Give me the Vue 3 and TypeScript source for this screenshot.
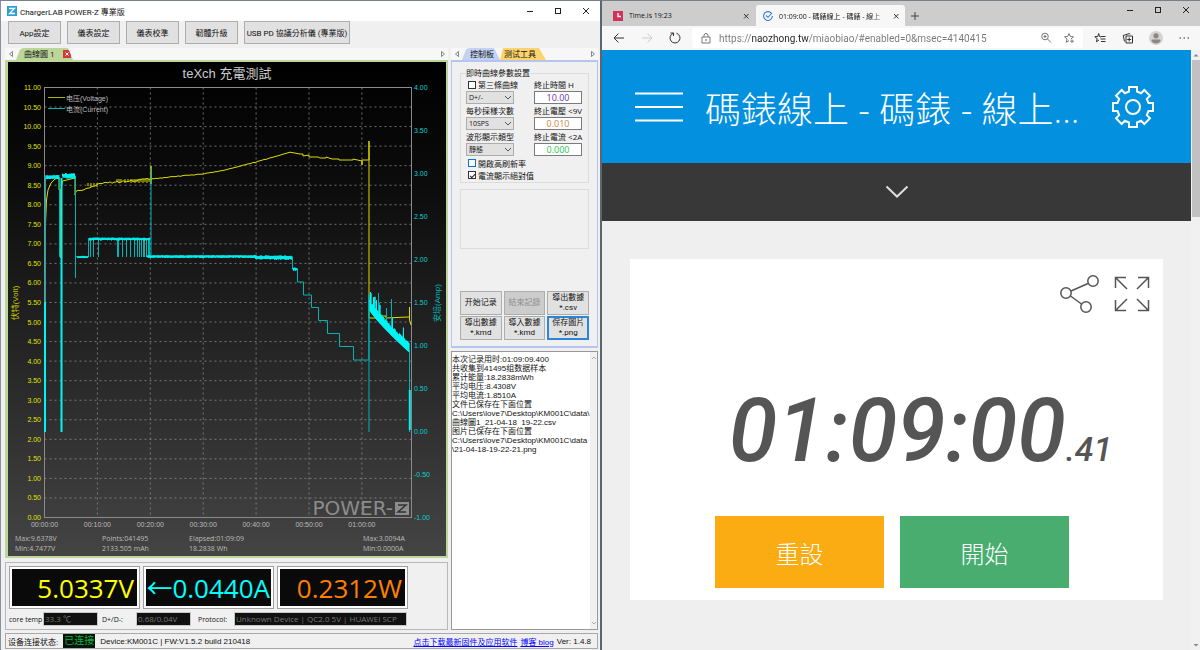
<script setup lang="ts">
import { ref } from 'vue'

const toolbar = ['App設定', '儀表設定', '儀表校準', '韌體升級']
const PLOT = { left: 44.5, right: 411.5, top: 87.5, bottom: 517.5 }

const voltTicks = Array.from({ length: 23 }, (_, i) => ({
  label: (11 - i * 0.5).toFixed(2),
  y: PLOT.top + (i * 430) / 22,
}))
const ampTicks = Array.from({ length: 11 }, (_, i) => ({
  label: (4 - i * 0.5).toFixed(2),
  y: PLOT.top + i * 43,
}))
const timeTicks = Array.from({ length: 7 }, (_, i) => ({
  label: i === 6 ? '01:00:00' : `00:${i}0:00`,
  x: PLOT.left + i * 52.9,
}))

const noise = (n: number) => Math.abs(Math.sin(n * 12.9898) * 43758.5453) % 1

function band(x0: number, x1: number, y: number, amp: number, step = 0.5): string {
  let d = ''
  let i = 0
  for (let x = x0; x <= x1; x += step) {
    const sign = i++ % 2 ? 1 : -1
    d += `L${x.toFixed(1)} ${(y + sign * amp * (0.6 + 0.5 * noise(x))).toFixed(1)}`
  }
  return d
}

function jitter(points: number[][], amp: number): string {
  let d = ''
  for (let i = 1; i < points.length; i++) {
    const [xa, ya] = points[i - 1]
    const [xb, yb] = points[i]
    for (let x = xa; x < xb; x += 2) {
      const y = ya + ((yb - ya) * (x - xa)) / (xb - xa)
      d += `L${x} ${(y + (noise(x) - 0.5) * amp).toFixed(1)}`
    }
  }
  return d
}

const voltagePath =
  'M45.5 270V224L46.5 200L48 190L51 183L55 179L59 178V190L61 190V258V190' +
  'L62.5 181L75 178V195' +
  jitter([[76, 192], [80, 190], [88, 188], [98, 184]], 2) +
  jitter([[98, 183], [117, 182], [150, 179]], 2) +
  'L151 180V166V184V179' +
  jitter([[152, 179], [180, 176], [203, 174], [225, 170], [256, 162], [291, 152]], 0.6) +
  'L300 154H303V156L309 155V157H318L320 158H326V157L332 159H339V160H353V159L362 161V165V160H369V141V318' +
  'H376V316H386V318L408 317H409.500V307V320L411 325'
const voltageNoise = [88, 91, 94, 97, 117, 119, 121, 125, 128, 131, 133, 135, 137, 139, 141, 143, 145, 147, 149]
  .map((x, i) => `M${x} ${i < 4 ? 183 : 179}v${3 + (i % 2)}`)
  .join('')

const currentBands = [
  'M46 177' + band(46, 59, 177, 2),
  'M62.5 176' + band(62.5, 75, 176, 2.5),
  'M77 257' + band(77, 88, 257, 1),
  'M89 239' + band(89, 150, 239, 1.3),
  'M147 257' + band(147, 255, 256.5, 1.3),
  'M255 257' + band(255, 292, 257.5, 2),
  'M293 269' + band(293, 297, 269, 1.5),
].join('')
const currentDrops = [88, 90, 93, 98, 117, 118, 122, 126, 130, 134, 137, 139, 141, 143, 144, 146, 148, 149]
  .map((x) => `M${x}.5 239V257`)
  .join('')
const currentPath =
  'M45.5 420V177M59.5 177V257M75.5 176V278V257M151 257V168M292.5 257V269H297.5V282H303.5V295H311.5V307.5H318.5V320.5' +
  'H327.5V333.5H339.5V346.5H353.5V360H369V295V432M409.5 350V432M378.5 320V293M391.5 330V299M379.5 318V303M386.5 325V308'
const currentStrong = 'M45 432V302M61.5 432V178M409.8 390V430'
const decay = (() => {
  let d = 'M369.5 300'
  for (let x = 370; x <= 409; x += 0.5) {
    const t = (x - 369) / 40
    const y = 306 + 43 * Math.pow(t, 0.85)
    const spread = 4 + 3 * noise(x) + (noise(x + 7) > 0.88 ? 11 : 0)
    d += `L${x} ${(y - spread).toFixed(1)}L${x} ${(y + 3).toFixed(1)}`
  }
  return d
})()

const gear = (() => {
  const pts: string[] = []
  for (let k = 0; k < 8; k++) {
    const a = (k * Math.PI) / 4
    for (const [x, y] of [[-4, -15.5], [-4, -20], [4, -20], [4, -15.5]]) {
      const px = x * Math.cos(a) - y * Math.sin(a)
      const py = x * Math.sin(a) + y * Math.cos(a)
      pts.push(`${px.toFixed(2)},${py.toFixed(2)}`)
    }
  }
  return pts.join(' ')
})()

const thirdCurve = ref(false)
const highRefresh = ref(false)
const absCurrent = ref(true)
const stopTime = ref('10.00')
const stopVolt = ref('0.010')
const stopAmp = ref('0.000')
const url = ref('https://naozhong.tw/miaobiao/#enabled=0&msec=4140415')
const log = ref(`本次记录用时:01:09:09.400
共收集到41495组数据样本
累计能量:18.2838mWh
平均电压:8.4308V
平均电流:1.8510A
文件已保存在下面位置
C:\\Users\\love7\\Desktop\\KM001C\\data\\
曲線圖1_21-04-18  19-22.csv
图片已保存在下面位置
C:\\Users\\love7\\Desktop\\KM001C\\data
\\21-04-18-19-22-21.png`)
</script>

<template>
  <div class="desktop">
    <section class="window meter">
      <header class="titlebar">
        <svg class="app-icon" viewBox="0 0 10 10"><rect width="10" height="10" fill="#2a9fd8" /><path d="M2 2.500H7.500L2.500 7.500H8" fill="none" stroke="#fff" stroke-width="1.300" /></svg>
        <h1>ChargerLAB POWER-Z 專業版</h1>
        <div class="controls">
          <button aria-label="Minimize"><svg viewBox="0 0 8 8"><path d="M1 4.500H7" /></svg></button>
          <button aria-label="Maximize"><svg viewBox="0 0 8 8"><rect x="1.500" y="1.500" width="5" height="5" /></svg></button>
          <button aria-label="Close"><svg viewBox="0 0 8 8"><path d="M1 1L7 7M7 1L1 7" /></svg></button>
        </div>
      </header>

      <nav class="toolbar">
        <button v-for="t in toolbar" :key="t">{{ t }}</button>
        <button class="wide">USB PD 協議分析儀 (專業版)</button>
      </nav>

      <div class="body">
        <div class="left-col">
          <div class="tabs">
            <button class="arrow" aria-label="Previous tab"><svg viewBox="0 0 6 8"><path d="M4.500 1.500V6.500L1.500 4Z" /></svg></button>
            <div class="tab green">
              <button>曲線圖 1</button>
              <button class="tab-close" aria-label="Close tab"><svg viewBox="0 0 8 8"><path d="M2.500 2.500L5.500 5.500M5.500 2.500L2.500 5.500" /></svg></button>
            </div>
            <button class="arrow end" aria-label="Next tab"><svg viewBox="0 0 6 8"><path d="M1.500 1.500V6.500L4.500 4Z" /></svg></button>
          </div>
          <div class="chart-frame">
            <svg class="chart" viewBox="8 62 438 494">
              <defs>
                <linearGradient id="chart-bg" x1="0" y1="0" x2="0" y2="1">
                  <stop offset="0" stop-color="#000" />
                  <stop offset="0.250" stop-color="#0c0c0c" />
                  <stop offset="1" stop-color="#444" />
                </linearGradient>
              </defs>
              <rect x="8" y="62" width="438" height="494" fill="url(#chart-bg)" />
              <text class="chart-title" x="227" y="78">teXch 充電測試</text>
              <g class="grid">
                <line v-for="t in voltTicks.slice(1, -1)" :key="t.label" :x1="PLOT.left" :x2="PLOT.right" :y1="t.y" :y2="t.y" />
                <line v-for="t in timeTicks.slice(1)" :key="t.label" :x1="t.x" :x2="t.x" :y1="PLOT.top" :y2="PLOT.bottom" />
              </g>
              <rect class="frame" :x="PLOT.left" :y="PLOT.top" width="367" height="430" />
              <g class="volt"><text v-for="t in voltTicks" :key="t.label" x="41" :y="t.y + 2.5">{{ t.label }}</text></g>
              <g class="amp"><text v-for="t in ampTicks" :key="t.label" x="414" :y="t.y + 2.5">{{ t.label }}</text></g>
              <g class="time"><text v-for="t in timeTicks" :key="t.label" :x="t.x" y="527">{{ t.label }}</text></g>
              <text class="axis-name volt-name" transform="translate(18 303) rotate(-90)">伏特(Volt)</text>
              <text class="axis-name amp-name" transform="translate(440 303) rotate(-90)">安培(Amp)</text>
              <path class="v-line" :d="voltagePath" />
              <path class="v-line" :d="voltageNoise" />
              <path class="a-dim" :d="currentPath" />
              <path class="a-dim" :d="currentDrops" />
              <path class="a-line" :d="currentBands" />
              <path class="a-line strong" :d="currentStrong" />
              <path class="a-line" :d="decay" />
              <path d="M48 97.500H65" stroke="#b4b400" />
              <path d="M48 108.500H65" stroke="#00b4b4" />
              <text class="legend" x="66" y="100.500">电压(Voltage)</text>
              <text class="legend" x="66" y="111.500">电流(Current)</text>
              <text class="brand" x="393" y="515">POWER-</text>
              <rect x="395" y="502" width="14" height="13" fill="#8c8c8c" />
              <path d="M398 505H406L398 512H406" fill="none" stroke="#333" stroke-width="1.500" />
              <g class="stats">
                <text x="15" y="541">Max:9.6378V</text><text x="15" y="551">Min:4.7477V</text>
                <text x="102" y="541">Points:041495</text><text x="102" y="551">2133.505 mAh</text>
                <text x="189" y="541">Elapsed:01:09:09</text><text x="189" y="551">18.2838 Wh</text>
                <text x="363" y="541">Max:3.0094A</text><text x="363" y="551">Min:0.0000A</text>
              </g>
            </svg>
          </div>
          <div class="readouts">
            <div class="big">
              <output class="yellow">5.0337V</output>
              <output class="cyan"><span>←</span>0.0440A</output>
              <output class="orange">0.2312W</output>
            </div>
            <div class="small">
              <label for="core">core temp</label><output id="core" class="w-temp">33.3 ℃</output>
              <label for="dp">D+/D-:</label><output id="dp" class="w-dp">0.68/0.04V</output>
              <label for="proto">Protocol:</label><output id="proto" class="w-proto">Unknown Device | QC2.0 5V | HUAWEI SCP</output>
            </div>
          </div>
        </div>

        <div class="right-col">
          <div class="tabs">
            <button class="arrow" aria-label="Previous tab"><svg viewBox="0 0 6 8"><path d="M4.500 1.500V6.500L1.500 4Z" /></svg></button>
            <div class="tab blue"><button>控制板</button></div>
            <div class="tab gold"><button>测试工具</button></div>
            <button class="arrow end" aria-label="Next tab"><svg viewBox="0 0 6 8"><path d="M1.500 1.500V6.500L4.500 4Z" /></svg></button>
          </div>
          <div class="panel">
            <fieldset>
              <legend>即時曲線參數設置</legend>
              <div class="settings">
                <label class="check"><input v-model="thirdCurve" type="checkbox" />第三條曲線</label>
                <label for="stop-time">終止時間 H</label>
                <select aria-label="第三條曲線"><option>D+/-</option></select>
                <input id="stop-time" v-model="stopTime" class="purple" />
                <label for="rate">每秒採樣次數</label>
                <label for="stop-volt">終止電壓 &lt;9V</label>
                <select id="rate"><option>10SPS</option></select>
                <input id="stop-volt" v-model="stopVolt" class="brown" />
                <label for="wave">波形顯示類型</label>
                <label for="stop-amp">終止電流 &lt;2A</label>
                <select id="wave"><option>靜態</option></select>
                <input id="stop-amp" v-model="stopAmp" class="lime" />
              </div>
              <label class="check focus"><input v-model="highRefresh" type="checkbox" />開啟高刷新率</label>
              <label class="check"><input v-model="absCurrent" type="checkbox" />電流顯示絕對值</label>
            </fieldset>
            <div class="empty-group"></div>
            <div class="actions">
              <button>开始记录</button>
              <button disabled>結束記錄</button>
              <button>導出數據<br />*.csv</button>
              <button>導出數據<br />*.kmd</button>
              <button>導入數據<br />*.kmd</button>
              <button class="primary">保存圖片<br />*.png</button>
            </div>
          </div>
          <div class="log">
            <textarea v-model="log" readonly aria-label="Log" wrap="off"></textarea>
            <div class="log-scroll">
              <svg viewBox="0 0 8 8"><path d="M2 5L4 3L6 5" /></svg>
              <svg viewBox="0 0 8 8"><path d="M2 3L4 5L6 3" /></svg>
            </div>
          </div>
        </div>
      </div>

      <footer class="status">
        <span>设备连接状态:</span>
        <strong>已连接</strong>
        <span class="device">Device:KM001C | FW:V1.5.2 build 210418</span>
        <a href="#firmware">点击下载最新固件及应用软件</a>
        <a href="#blog">博客 blog</a>
        <span>Ver: 1.4.8</span>
      </footer>
    </section>

    <section class="window browser">
      <div class="tabstrip">
        <div class="btab first">
          <svg class="fav" viewBox="0 0 10 10"><rect width="10" height="10" fill="#d5305a" /><path d="M5 2V5.500H8" fill="none" stroke="#fff" stroke-width="1.400" /></svg>
          <button class="btab-title">Time.is 19:23</button>
          <button class="x" aria-label="Close tab"><svg viewBox="0 0 8 8"><path d="M2 2L6.500 6.500M6.500 2L2 6.500" /></svg></button>
        </div>
        <div class="btab active">
          <svg class="fav" viewBox="0 0 10 10"><path d="M8.800 2.800A4.400 4.400 0 1 0 9.400 5M3 4.500L5 6.300L9 2" fill="none" stroke="#3b78d8" stroke-width="1.100" /></svg>
          <button class="btab-title fade">01:09:00 - 碼錶線上 - 碼錶 - 線上</button>
          <button class="x" aria-label="Close tab"><svg viewBox="0 0 8 8"><path d="M2 2L6.500 6.500M6.500 2L2 6.500" /></svg></button>
        </div>
        <button class="new-tab" aria-label="New tab"><svg viewBox="0 0 10 10"><path d="M5 1V9M1 5H9" /></svg></button>
        <div class="controls">
          <button aria-label="Minimize"><svg viewBox="0 0 8 8"><path d="M1 4.500H7" /></svg></button>
          <button aria-label="Maximize"><svg viewBox="0 0 8 8"><rect x="1.500" y="1.500" width="5" height="5" /></svg></button>
          <button aria-label="Close"><svg viewBox="0 0 8 8"><path d="M1 1L7 7M7 1L1 7" /></svg></button>
        </div>
      </div>

      <div class="addressbar">
        <button aria-label="Back"><svg viewBox="0 0 14 14"><path d="M12 7H2M6.500 2.500L2 7L6.500 11.500" /></svg></button>
        <button aria-label="Forward" disabled><svg viewBox="0 0 14 14"><path d="M2 7H12M7.500 2.500L12 7L7.500 11.500" /></svg></button>
        <button aria-label="Reload"><svg viewBox="0 0 14 14"><path d="M5.500 2.200A5 5 0 1 0 8.500 2.200M5.500 5V2H2.500" /></svg></button>
        <div class="field">
          <svg class="lock" viewBox="0 0 12 12"><path d="M2 5H10V11H2ZM4 5V3.500A2 2 0 0 1 8 3.500V5" /><circle cx="6" cy="8" r="0.500" /></svg>
          <input v-model="url" aria-label="Address" />
          <button aria-label="Zoom"><svg viewBox="0 0 12 12"><circle cx="5" cy="4.500" r="3.300" /><path d="M7.500 7L11 10.500M3.500 4.500H6.500M5 3V6" /></svg></button>
          <button aria-label="Add to favorites"><svg viewBox="0 0 12 12"><path d="M6 1.500L7.300 4.500L10.500 4.800L8 7M6 1.500L4.700 4.500L1.500 4.800L4 7L3.200 10.300L6 8.600M9 7.500V11M7.300 9.200H10.800" /></svg></button>
        </div>
        <button aria-label="Favorites"><svg viewBox="0 0 14 14"><path d="M8 6L6.500 5.500L5.700 2.500L4.700 5.500L1.800 5.700L4.200 7.600L3.400 10.800L6 9M8 5.500H12.500M7.500 8H12.500M8 10.500H12.500" /></svg></button>
        <button aria-label="Collections"><svg viewBox="0 0 14 14"><path d="M5 5H11.500V12H5ZM3.500 10.500L2.200 4.500L8.500 2.500L9 3.500M8.200 6.500V10.500M6.200 8.500H10.200" /></svg></button>
        <button aria-label="Profile" class="avatar"><svg viewBox="0 0 14 14"><circle cx="7" cy="7" r="7" fill="#d6d3d1" stroke="none" /><circle cx="7" cy="4.800" r="2.600" fill="#8a8886" stroke="none" /><path d="M2.500 9.500Q2.500 8.500 3.500 8.500H10.500Q11.500 8.500 11.500 9.500Q10.500 12.500 7 12.500Q3.500 12.500 2.500 9.500" fill="#8a8886" stroke="none" /></svg></button>
        <button aria-label="More"><svg viewBox="0 0 14 14"><path d="M2.500 7H4M6.500 7H8M10.500 7H12" /></svg></button>
      </div>

      <div class="viewport">
        <main class="page">
          <header class="site-head">
            <button aria-label="Menu"><svg class="burger" viewBox="0 0 48 30"><path d="M0 1.500H48M0 15H48M0 28.500H48" /></svg></button>
            <h2>碼錶線上 - 碼錶 - 線上...</h2>
            <button aria-label="Settings"><svg class="gear" viewBox="-22 -22 44 44"><polygon :points="gear" /><circle r="7" /></svg></button>
          </header>
          <button class="expander" aria-label="Expand"><svg viewBox="0 0 24 14"><path d="M1.500 1.500L12 11.500L22.500 1.500" /></svg></button>
          <section class="card">
            <div class="card-icons">
              <button aria-label="Share"><svg class="share" viewBox="0 0 40 38"><circle cx="6" cy="18" r="5.200" /><circle cx="33" cy="6" r="5.200" /><circle cx="26" cy="32" r="5.200" /><path d="M11 16L28 8.500M10.500 21L21.500 29" /></svg></button>
              <button aria-label="Full screen"><svg class="full" viewBox="0 0 36 36"><path d="M12 1.500H1.500V12M1.500 1.500L13 13M24 1.500H34.500V12M34.500 1.500L23 13M1.500 24V34.500H12M1.500 34.500L13 23M34.500 24V34.500H24M34.500 34.500L23 23" /></svg></button>
            </div>
            <time class="clock">01:09:00<small>.41</small></time>
            <div class="card-actions">
              <button class="reset">重設</button>
              <button class="start">開始</button>
            </div>
          </section>
        </main>
        <div class="scrollbar">
          <svg viewBox="0 0 8 10"><path d="M1.500 6.500L4 4L6.500 6.500Z" /></svg>
          <div class="thumb"></div>
          <svg viewBox="0 0 8 10"><path d="M1.500 4L4 6.500L6.500 4Z" /></svg>
        </div>
      </div>
    </section>
  </div>
</template>

<style>
body {
  background: #8c96a0;
}
</style>

<style scoped>
* {
  box-sizing: border-box;
}
button,
input,
select,
textarea {
  font: inherit;
  color: inherit;
  margin: 0;
  padding: 0;
  border: 0;
  background: none;
  border-radius: 0;
}
svg {
  display: block;
  flex: none;
}
.desktop {
  display: grid;
  grid-template-columns: 1fr 1fr;
  min-height: 100vh;
  font-family: "Open Sans", "Noto Sans CJK TC", sans-serif;
  font-size: 8px;
  color: #111;
}
.window {
  display: flex;
  flex-direction: column;
  min-width: 0;
  border-top: 1px solid #77808c;
  border-left: 1px solid #8791a0;
}
.meter {
  background: #f0f0f0;
}
.titlebar {
  display: flex;
  align-items: center;
  height: 20px;
  padding-left: 6px;
  background: #fff;
}
.app-icon {
  width: 10px;
  height: 10px;
}
h1 {
  flex: 1;
  margin: 0 0 0 3px;
  font-family: Roboto, "Noto Sans CJK TC", sans-serif;
  font-size: 8px;
  font-weight: 400;
  white-space: nowrap;
}
.controls {
  display: flex;
}
.controls button {
  display: grid;
  place-items: center;
  width: 28px;
  height: 18px;
}
.controls svg {
  width: 8px;
  height: 8px;
  fill: none;
  stroke: #222;
}
.toolbar {
  display: flex;
  gap: 6px;
  padding: 0 7px;
  font-family: Roboto, "Noto Sans CJK TC", sans-serif;
}
.toolbar button {
  width: 53px;
  height: 23px;
  border: 1px solid #adadad;
  background: #e1e1e1;
  white-space: nowrap;
}
.toolbar .wide {
  width: 106px;
}
.body {
  display: grid;
  grid-template-columns: 443fr 147fr;
  gap: 3px;
  flex: 1;
  padding: 4px 2px 3px 4px;
}
.left-col,
.right-col {
  display: flex;
  flex-direction: column;
  min-width: 0;
}
.tabs {
  display: flex;
  align-items: center;
  height: 12px;
  background: #f7f7f7;
}
.arrow {
  width: 11px;
  display: grid;
  place-items: center;
}
.arrow svg {
  width: 6px;
  height: 8px;
  fill: none;
  stroke: #555;
  stroke-width: 0.7;
}
.end {
  margin-left: auto;
}
.tab {
  display: flex;
  align-items: center;
  height: 12px;
  padding: 0 6px 0 8px;
  line-height: 12px;
  white-space: nowrap;
}
.green {
  width: 57px;
  padding-right: 2px;
  justify-content: space-between;
  background: #bcd69a;
  clip-path: polygon(0 100%, 4px 12%, 7px 0, 52px 0, 100% 100%);
}
.blue {
  width: 38px;
  background: #c3d2f4;
  clip-path: polygon(0 100%, 4px 12%, 7px 0, 32px 0, 100% 100%);
}
.gold {
  width: 46px;
  padding-left: 4px;
  background: #fdd36b;
  clip-path: polygon(0 100%, 3px 0, 39px 0, 100% 100%);
}
.tab-close {
  width: 8px;
  height: 8px;
  background: #d23a3a;
}
.tab-close svg {
  fill: none;
  stroke: #fff;
}
.chart-frame {
  border: 2px solid #bcd69a;
  border-left-width: 3px;
  background: #555;
}
.chart {
  width: 100%;
  height: auto;
}
.chart text {
  font-family: "Liberation Sans", "Noto Sans CJK TC", sans-serif;
  font-size: 7px;
}
.chart .chart-title {
  fill: #ccc;
  font-size: 13px;
  text-anchor: middle;
}
.grid line {
  stroke: #8a8a8a;
  stroke-dasharray: 2 3;
  stroke-width: 1;
  opacity: 0.8;
}
.frame {
  fill: none;
  stroke: #8a8a8a;
}
.volt text {
  fill: #e0e000;
  text-anchor: end;
}
.amp text {
  fill: #00d2d2;
}
.time text {
  fill: #bbb;
  text-anchor: middle;
}
.chart .axis-name {
  font-size: 8px;
  text-anchor: middle;
}
.volt-name {
  fill: #c8c800;
}
.amp-name {
  fill: #00b8b8;
}
.v-line {
  fill: none;
  stroke: #dcdc00;
}
.a-dim {
  fill: none;
  stroke: #00b4b4;
}
.a-line {
  fill: none;
  stroke: #00f4f4;
}
.strong {
  stroke-width: 2;
}
.chart .legend {
  font-size: 7px;
  fill: #bbb;
}
.chart .brand {
  font-family: "DejaVu Sans", sans-serif;
  font-size: 20px;
  fill: #8c8c8c;
  text-anchor: end;
}
.chart .stats text {
  font-family: "Open Sans", sans-serif;
  fill: #bbb;
}
.readouts {
  flex: 1;
  margin-top: 4px;
  padding: 3px;
  border: 1px solid #b8b8b8;
}
.big {
  display: flex;
  gap: 3px;
}
.big output {
  display: flex;
  justify-content: flex-end;
  align-items: center;
  width: 131px;
  height: 43px;
  padding-right: 5px;
  border: 1px solid #a0a0a0;
  background: #0a0a0a;
  box-shadow: inset 0 0 0 2px #fff;
  font-size: 26px;
  line-height: 38px;
}
.big .cyan {
  padding-right: 3px;
}
.yellow {
  color: #ff0;
}
.cyan {
  color: #0ff;
}
.orange {
  color: #ff8000;
}
.small {
  display: flex;
  align-items: center;
  margin-top: 3px;
  font-size: 7px;
}
.small label {
  white-space: nowrap;
}
.small output {
  height: 14px;
  padding: 0 1px;
  border: 1px solid #c8c8c8;
  background: #111;
  color: #777;
  font-size: 8px;
  line-height: 12px;
  white-space: nowrap;
}
.small label:nth-of-type(1) {
  width: 34px;
}
.small label:nth-of-type(2) {
  width: 34px;
  margin-left: 4px;
}
.small label:nth-of-type(3) {
  width: 36px;
  margin-left: 7px;
}
.w-temp,
.w-dp {
  width: 55px;
}
.w-proto {
  width: 173px;
}
.panel {
  flex: none;
  padding: 5px 8px 6px;
  border: 1px solid #b4c6f0;
  border-width: 2px 1px;
}
fieldset {
  margin: 0;
  padding: 0 6px 1px 5px;
  border: 1px solid #dcdcdc;
}
legend {
  margin: 0;
  padding: 0;
  height: 12px;
  line-height: 12px;
}
.settings {
  display: grid;
  grid-template-columns: 48px 48px;
  grid-auto-rows: 12px 14px;
  justify-content: space-between;
}
.settings label {
  line-height: 12px;
  white-space: nowrap;
}
.settings > input {
  height: 13px;
  min-width: 0;
  border: 1px solid #7a7a7a;
  background: #fff;
  font-size: 9px;
  line-height: 11px;
  text-align: center;
}
.purple {
  color: #7030b0;
}
.brown {
  color: #cd853f;
}
.lime {
  color: #22c84a;
}
select {
  appearance: none;
  height: 13px;
  padding-left: 2px;
  border: 1px solid #adadad;
  background:
    linear-gradient(45deg, transparent 42%, #555 42% 62%, transparent 62%) 38px 4px / 3px 3px no-repeat,
    linear-gradient(-45deg, transparent 42%, #555 42% 62%, transparent 62%) 41px 4px / 3px 3px no-repeat,
    #e1e1e1;
  font-size: 7px;
  line-height: 11px;
}
.check {
  display: flex;
  align-items: center;
  gap: 2px;
  height: 12px;
  padding-left: 2px;
  white-space: nowrap;
}
.check input {
  appearance: none;
  width: 8px;
  height: 8px;
  flex: none;
  border: 1px solid #333;
  background: #fff;
  display: grid;
  place-items: center;
}
.check.focus input {
  border-color: #0078d7;
}
.check input:checked::after {
  content: "";
  width: 2px;
  height: 4px;
  border: solid #222;
  border-width: 0 1px 1px 0;
  transform: rotate(45deg);
}
.empty-group {
  height: 60px;
  margin: 6px 0 42px;
  border: 1px solid #dcdcdc;
}
.actions {
  display: grid;
  grid-template-columns: repeat(3, 1fr);
  gap: 1px 2px;
  font-family: Roboto, "Noto Sans CJK TC", sans-serif;
}
.actions button {
  height: 24px;
  border: 1px solid #adadad;
  background: #e1e1e1;
  line-height: 10px;
  white-space: nowrap;
}
.actions button:disabled {
  background: #ccc;
  color: #8f8f8f;
}
.actions .primary {
  border: 2px solid #2a86d8;
}
.log {
  display: flex;
  flex: 1;
  margin-top: 3px;
  border: 1px solid #999;
  background: #fff;
}
.log textarea {
  flex: 1;
  min-width: 0;
  padding: 3px 0 0;
  resize: none;
  overflow: hidden;
  outline: 0;
  font-family: "Liberation Sans", "Noto Sans CJK SC", sans-serif;
  line-height: 9px;
  white-space: pre;
}
.log-scroll {
  display: flex;
  flex-direction: column;
  justify-content: space-between;
  align-items: center;
  width: 7px;
  padding: 2px 0;
  background: #f0f0f0;
}
.log-scroll svg {
  width: 8px;
  height: 8px;
  fill: none;
  stroke: #aaa;
}
.status {
  display: flex;
  align-items: center;
  gap: 3px;
  height: 16px;
  margin: 0 2px 1px 4px;
  padding: 0 6px 0 2px;
  border: 1px solid #a8a8a8;
  font-family: "Liberation Sans", "Noto Sans CJK SC", sans-serif;
  white-space: nowrap;
}
.status strong {
  margin-left: 2px;
  padding: 0 1px;
  background: #0a140a;
  color: #10b040;
  font-size: 10px;
  font-weight: 400;
  line-height: 14px;
}
.device {
  margin: 0 auto 0 2px;
}
.status a {
  color: #00f;
}

.browser {
  background: #f7f7f7;
  border-left-width: 2px;
  border-left-color: #5d6670;
}
.tabstrip {
  display: flex;
  align-items: flex-end;
  height: 25px;
  background: #cdcdcd;
}
.btab {
  display: flex;
  align-items: center;
  height: 21px;
}
.first {
  width: 154px;
  padding: 0 6px 0 11px;
}
.active {
  width: 149px;
  padding: 0 5px 0 7px;
  border-radius: 3px 3px 0 0;
  background: #f7f7f7;
}
.fav {
  width: 10px;
  height: 10px;
}
.btab-title {
  flex: 1;
  min-width: 0;
  margin-left: 6px;
  overflow: hidden;
  font-size: 7px;
  text-align: left;
  white-space: nowrap;
}
.fade {
  mask-image: linear-gradient(to right, #000 80%, transparent);
}
.x svg {
  width: 8px;
  height: 8px;
  stroke: #333;
}
.new-tab {
  height: 21px;
  padding: 0 5px;
}
.new-tab svg {
  width: 10px;
  height: 10px;
  stroke: #444;
}
.tabstrip .controls {
  margin-left: auto;
  align-self: flex-start;
}
.addressbar {
  display: flex;
  align-items: center;
  height: 24px;
  padding: 0 9px 0 10px;
  gap: 14px;
}
.addressbar svg {
  width: 14px;
  height: 14px;
  fill: none;
  stroke: #333;
}
.addressbar button:disabled svg {
  stroke: #ccc;
}
.addressbar button {
  flex: none;
}
.field {
  display: flex;
  flex: 1;
  align-items: center;
  gap: 11px;
  height: 20px;
  margin: 0 -4px;
  padding: 0 8px;
  border-radius: 3px;
  background: #fff;
}
.field svg {
  width: 12px;
  height: 12px;
  stroke: #777;
}
.field input {
  flex: 1;
  min-width: 0;
  margin-left: -4px;
  font-family: Roboto, "Liberation Sans", sans-serif;
  font-size: 10px;
  -webkit-text-fill-color: transparent;
  background: linear-gradient(to right, #777 33px, #222 33px 90px, #777 90px);
  background-clip: text;
}
.viewport {
  display: flex;
  flex: 1;
}
.page {
  flex: 1;
  min-width: 0;
  background: #efefef;
}
.site-head {
  display: flex;
  align-items: center;
  gap: 22px;
  height: 113px;
  padding: 0 36px 0 33px;
  background: #0290df;
  color: #fff;
}
.site-head svg {
  fill: none;
  stroke: #fff;
  stroke-width: 2;
}
.burger {
  width: 48px;
  height: 30px;
}
.gear {
  width: 44px;
  height: 44px;
}
h2 {
  flex: 1;
  min-width: 0;
  margin: 6px 0 0;
  overflow: hidden;
  font-size: 36px;
  font-weight: 300;
  line-height: 54px;
  white-space: nowrap;
}
.expander {
  display: grid;
  place-items: center;
  width: 100%;
  height: 58px;
  background: #383838;
}
.expander svg {
  width: 24px;
  height: 14px;
  fill: none;
  stroke: #ddd;
  stroke-width: 2;
}
.card {
  display: flex;
  flex-direction: column;
  margin: 38px 28px 48px;
  padding: 16px 13px 12px;
  background: #fff;
}
.card-icons {
  display: flex;
  align-items: center;
  justify-content: flex-end;
  gap: 14px;
}
.card-icons svg {
  fill: none;
  stroke: #555;
  stroke-width: 1.5;
}
.share {
  width: 40px;
  height: 38px;
}
.full {
  width: 36px;
  height: 36px;
}
.clock {
  display: block;
  margin: 66px 0 15px;
  padding-left: 48px;
  color: #555;
  font-family: Roboto, "Liberation Sans", sans-serif;
  font-size: 88px;
  font-style: italic;
  font-weight: 500;
  line-height: 103px;
  text-align: center;
  white-space: nowrap;
}
.clock small {
  font-size: 34px;
}
.card-actions {
  display: flex;
  justify-content: center;
  gap: 16px;
  padding-right: 9px;
}
.card-actions button {
  width: 169px;
  height: 72px;
  color: #fff;
  font-size: 24px;
  font-weight: 300;
}
.reset {
  background: #fbac12;
}
.start {
  background: #49ad70;
}
.scrollbar {
  display: flex;
  flex-direction: column;
  width: 9px;
  padding-left: 1px;
  background: #f1f1f1;
}
.scrollbar svg {
  width: 8px;
  height: 10px;
  fill: #888;
}
.scrollbar .thumb {
  height: 157px;
  margin-bottom: auto;
  background: #c1c1c1;
}
</style>
